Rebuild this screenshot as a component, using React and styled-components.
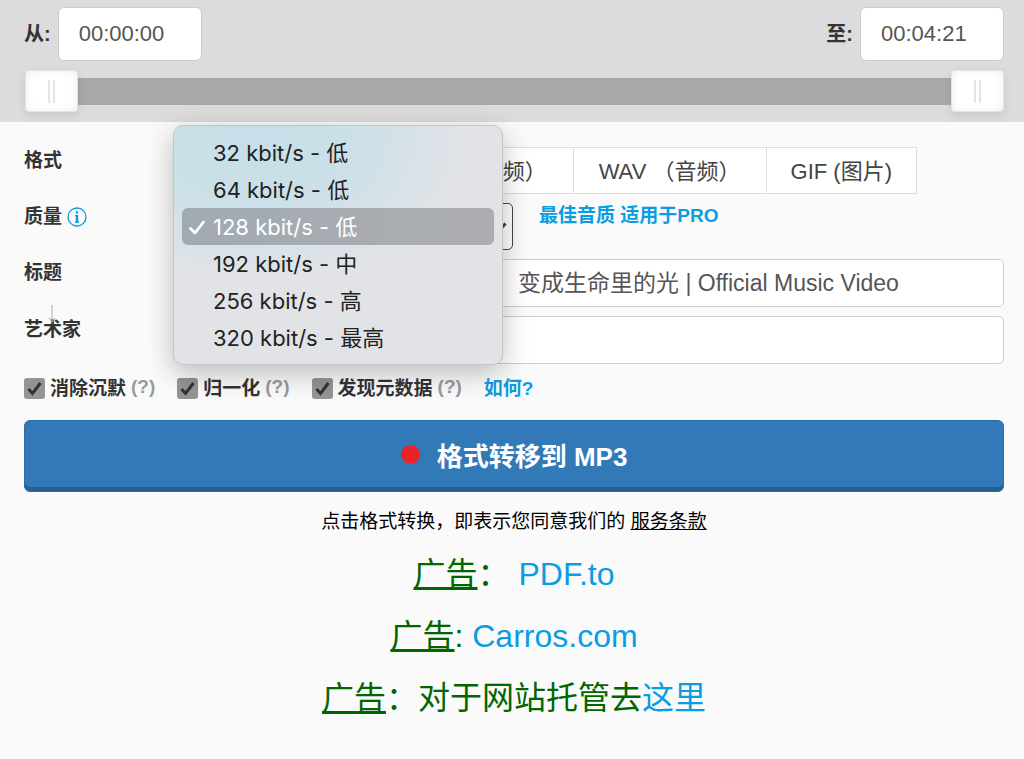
import { useState } from "react";
import styled, { createGlobalStyle } from "styled-components";

const LENGTH = 261;

const qualities = [
  { value: "32", label: "32 kbit/s - 低" },
  { value: "64", label: "64 kbit/s - 低" },
  { value: "128", label: "128 kbit/s - 低" },
  { value: "192", label: "192 kbit/s - 中" },
  { value: "256", label: "256 kbit/s - 高" },
  { value: "320", label: "320 kbit/s - 最高" },
];

const formats = ["MP4 （视频）", "WAV （音频）", "GIF (图片)"];

const options = [
  { id: "silence", label: "消除沉默" },
  { id: "normalize", label: "归一化" },
  { id: "metadata", label: "发现元数据" },
];

const toTime = (seconds) => {
  const pad = (n) => String(n).padStart(2, "0");
  return `${pad(Math.floor(seconds / 3600))}:${pad(
    Math.floor(seconds / 60) % 60
  )}:${pad(seconds % 60)}`;
};

const TrimPanel = () => {
  const [start, setStart] = useState(0);
  const [end, setEnd] = useState(LENGTH);

  return (
    <St.Trim>
      <St.TimeRow>
        <St.TimeField>
          <St.TimeLabel htmlFor="start">从:</St.TimeLabel>
          <St.TimeInput id="start" value={toTime(start)} readOnly />
        </St.TimeField>
        <St.TimeField>
          <St.TimeLabel htmlFor="end">至:</St.TimeLabel>
          <St.TimeInput id="end" value={toTime(end)} readOnly />
        </St.TimeField>
      </St.TimeRow>
      <St.Slider>
        <St.Range
          type="range"
          aria-label="从"
          max={LENGTH}
          value={start}
          onChange={(e) => setStart(Math.min(Number(e.target.value), end))}
        />
        <St.Range
          type="range"
          aria-label="至"
          max={LENGTH}
          value={end}
          onChange={(e) => setEnd(Math.max(Number(e.target.value), start))}
        />
      </St.Slider>
    </St.Trim>
  );
};

const QualityPicker = () => {
  const [quality, setQuality] = useState("128");

  return (
    <St.SelectBox>
      <St.Select
        id="quality"
        value={quality}
        onChange={(e) => setQuality(e.target.value)}
      >
        {qualities.map((q) => (
          <option key={q.value} value={q.value}>
            {q.label}
          </option>
        ))}
      </St.Select>
      <St.Chevron viewBox="0 0 14 10" aria-hidden="true">
        <path d="M1.5 1.5 7 7.5l5.5-6" />
      </St.Chevron>
      <St.Menu>
        {qualities.map((q) => (
          <li key={q.value}>
            <St.MenuItem
              type="button"
              $isPicked={q.value === quality}
              onClick={() => setQuality(q.value)}
            >
              <St.Tick viewBox="0 0 18 18" aria-hidden="true">
                {q.value === quality && <path d="M2.5 12.5 7 17 15.5 6" />}
              </St.Tick>
              {q.label}
            </St.MenuItem>
          </li>
        ))}
      </St.Menu>
    </St.SelectBox>
  );
};

const App = () => {
  return (
    <>
      <GlobalStyle />
      <TrimPanel />
      <St.Form onSubmit={(e) => e.preventDefault()}>
        <St.Fields>
          <St.Label as="span">格式</St.Label>
          <St.Formats>
            {formats.map((format) => (
              <St.Format type="button" key={format}>
                {format}
              </St.Format>
            ))}
          </St.Formats>

          <St.Label htmlFor="quality">
            质量
            <St.Info viewBox="0 0 20 20" aria-hidden="true">
              <circle cx="10" cy="10" r="9" />
              <St.InfoMark d="M10 8v7.4M10 4.2v2.4" />
              <path d="M8 8.6h2M8 15h4" />
            </St.Info>
          </St.Label>
          <St.QualityRow>
            <QualityPicker />
            <St.Link href="#pro">最佳音质 适用于PRO</St.Link>
          </St.QualityRow>

          <St.Label htmlFor="title">标题</St.Label>
          <St.TextInput
            id="title"
            $inset={329}
            defaultValue="变成生命里的光 | Official Music Video"
          />

          <St.Label htmlFor="artist">
            艺术家
            <St.Arrow viewBox="0 0 8 18" aria-hidden="true">
              <path d="M4 0v17M1 13l3 4 3-4" />
            </St.Arrow>
          </St.Label>
          <St.TextInput id="artist" $inset={24} />
        </St.Fields>

        <St.Options>
          {options.map((option) => (
            <St.Option key={option.id}>
              <St.Checkbox type="checkbox" id={option.id} defaultChecked />
              <label htmlFor={option.id}>{option.label}</label>
              <St.Hint>(?)</St.Hint>
            </St.Option>
          ))}
          <St.Link href="#how">如何?</St.Link>
        </St.Options>

        <St.Convert type="submit">
          <St.Dot />
          格式转移到 MP3
        </St.Convert>

        <St.Terms>
          点击格式转换，即表示您同意我们的 <a href="#terms">服务条款</a>
        </St.Terms>

        <St.Ad>
          <u>广告</u>：&nbsp;<a href="#pdf">PDF.to</a>
        </St.Ad>
        <St.Ad>
          <u>广告</u>: <a href="#carros">Carros.com</a>
        </St.Ad>
        <St.Ad>
          <u>广告</u>：对于网站托管去<a href="#hosting">这里</a>
        </St.Ad>
      </St.Form>
    </>
  );
};

const GlobalStyle = createGlobalStyle`
  * {
    box-sizing: border-box;
  }

  body {
    margin: 0;
    font-family: "Liberation Sans", "Noto Sans CJK SC", sans-serif;
    font-size: 19px;
    color: #333;
    background-color: #fafafa;
  }

  button,
  input,
  select {
    margin: 0;
    font-family: inherit;
  }
`;

const St = {
  Trim: styled.section`
    display: flex;
    flex-direction: column;
    gap: 9px;
    padding: 7px 20px 10px 24px;
    background-color: #dcdcdc;
  `,
  TimeRow: styled.div`
    display: flex;
    justify-content: space-between;
  `,
  TimeField: styled.div`
    display: flex;
    align-items: center;
    gap: 7px;
  `,
  TimeLabel: styled.label`
    padding-bottom: 4px;

    font-size: 20px;
    font-weight: bold;
  `,
  TimeInput: styled.input`
    width: 144px;
    height: 54px;
    padding: 0 20px;

    border: 1px solid #ccc;
    border-radius: 6px;

    font-size: 22px;
    color: #555;
    background-color: #fff;
  `,
  Slider: styled.div`
    display: grid;
    align-items: center;
    padding-left: 1px;

    background: linear-gradient(#a8a8a8, #a8a8a8) center /
      calc(100% - 40px) 27px no-repeat;
  `,
  Range: styled.input`
    grid-area: 1 / 1;
    width: 100%;
    height: 42px;

    appearance: none;
    background: transparent;
    pointer-events: none;

    &::-webkit-slider-thumb {
      width: 53px;
      height: 42px;

      appearance: none;
      border: 1px solid #e4e4e4;
      border-radius: 4px;
      background: linear-gradient(#e4e4e4, #e4e4e4) 22px 9px / 2px 23px
          no-repeat,
        linear-gradient(#e4e4e4, #e4e4e4) 27px 9px / 2px 23px no-repeat, #fff;
      box-shadow: inset 0 0 9px #eee, 0 3px 9px rgba(0, 0, 0, 0.1);
      pointer-events: auto;
    }
  `,
  Form: styled.form`
    padding: 25px 20px 36px 24px;
  `,
  Fields: styled.div`
    display: grid;
    grid-template-columns: 164px 1fr;
    row-gap: 9px;
  `,
  Label: styled.label`
    position: relative;
    display: flex;
    align-items: center;
    align-self: start;
    gap: 5px;

    font-weight: bold;
    line-height: 27px;
  `,
  Info: styled.svg`
    width: 20px;
    height: 20px;

    fill: none;
    stroke: #0a9de2;
    stroke-width: 1.3;
  `,
  InfoMark: styled.path`
    stroke-width: 2.4;
  `,
  Arrow: styled.svg`
    position: absolute;
    top: -11px;
    left: 24px;
    width: 8px;
    height: 18px;

    fill: none;
    stroke: #aaa;
  `,
  Formats: styled.div`
    display: flex;
    justify-content: flex-end;
    width: 729px;
  `,
  Format: styled.button`
    height: 47px;
    padding: 0 24px 4px;

    border: 1px solid #ddd;
    border-left-width: 0;

    font-size: 22px;
    white-space: nowrap;
    color: #444;
    background-color: #fff;

    &:first-child {
      border-left-width: 1px;
    }

    &:not(:last-child) {
      width: 193px;
    }
  `,
  QualityRow: styled.div`
    display: flex;
    align-items: flex-start;
    gap: 26px;

    line-height: 25px;
  `,
  SelectBox: styled.div`
    position: relative;
    width: 325px;
  `,
  Select: styled.select`
    width: 100%;
    height: 47px;
    padding: 0 24px;

    appearance: none;
    border: 1px solid #444;
    border-radius: 5px;

    font-size: 22px;
    color: #444;
    background-color: #fff;
  `,
  Chevron: styled.svg`
    position: absolute;
    top: 19px;
    right: 6px;
    width: 14px;
    height: 10px;

    fill: none;
    stroke: #444;
    stroke-width: 3;
  `,
  Menu: styled.ul`
    position: absolute;
    z-index: 1;
    top: -78px;
    left: -15px;
    width: 330px;
    margin: 0;
    padding: 8px;

    border: 1px solid #c4c5c7;
    border-radius: 10px;

    list-style: none;
    background: radial-gradient(
        ellipse 65% 60% at 25% 5%,
        #c6dfe8 0%,
        #cbe0e8 45%,
        rgba(226, 227, 231, 0) 100%
      ),
      #e2e3e7;
    box-shadow: 0 8px 28px rgba(0, 0, 0, 0.26);
  `,
  MenuItem: styled.button`
    display: flex;
    align-items: center;
    gap: 7px;
    width: 100%;
    height: 37px;
    padding: 0 6px 4px;

    border: none;
    border-radius: 6px;

    font-family: Inter, "Noto Sans CJK SC", sans-serif;
    font-size: 22px;
    color: ${({ $isPicked }) => ($isPicked ? "#fff" : "#222")};
    background: ${({ $isPicked }) =>
      $isPicked ? "linear-gradient(90deg, #a1a9b3, #adaeb0)" : "none"};
  `,
  Tick: styled.svg`
    width: 18px;
    height: 18px;

    overflow: visible;
    fill: none;
    stroke: currentColor;
    stroke-width: 2.8;
    stroke-linecap: round;
    stroke-linejoin: round;
  `,
  TextInput: styled.input`
    width: 100%;
    height: 48px;
    padding: 0 24px 4px ${({ $inset }) => $inset}px;

    border: 1px solid #ccc;
    border-radius: 5px;

    font-size: 23px;
    color: #555;
    background-color: #fff;
  `,
  Link: styled.a`
    font-weight: bold;
    color: #0a9de2;
    text-decoration: none;
  `,
  Options: styled.div`
    display: flex;
    align-items: center;
    gap: 22px;
    margin: 11px 0 18px;

    font-weight: bold;
    line-height: 27px;
  `,
  Option: styled.div`
    display: flex;
    align-items: center;
    gap: 5px;
  `,
  Checkbox: styled.input`
    width: 21px;
    height: 21px;

    appearance: none;
    border-radius: 3px;
    background-color: #949494;

    &:checked {
      background-image: url('data:image/svg+xml,<svg xmlns="http://www.w3.org/2000/svg" viewBox="0 0 21 21"><path d="M4.5 11l4 4.5 8-10.5" fill="none" stroke="%23333" stroke-width="3"/></svg>');
    }
  `,
  Hint: styled.span`
    padding-bottom: 3px;

    line-height: 24px;
    color: #999;
  `,
  Convert: styled.button`
    display: flex;
    justify-content: center;
    align-items: center;
    gap: 17px;
    width: 100%;
    height: 72px;
    padding-bottom: 5px;

    border: 1px solid #2a6ba8;
    border-radius: 6px;

    font-size: 26px;
    font-weight: bold;
    color: #fff;
    background-color: #3279b8;
    box-shadow: inset 0 -4px #265f91;
  `,
  Dot: styled.span`
    width: 19px;
    height: 19px;

    border-radius: 50%;
    background-color: #ea2328;
  `,
  Terms: styled.p`
    margin: 16px 0 18px;

    line-height: 28px;
    text-align: center;
    color: #000;

    a {
      color: inherit;
    }
  `,
  Ad: styled.p`
    margin: 0 0 22px;

    font-size: 32px;
    line-height: 40px;
    text-align: center;
    color: #060;

    a {
      color: #0a9de2;
      text-decoration: none;
    }
  `,
};

export default App;
